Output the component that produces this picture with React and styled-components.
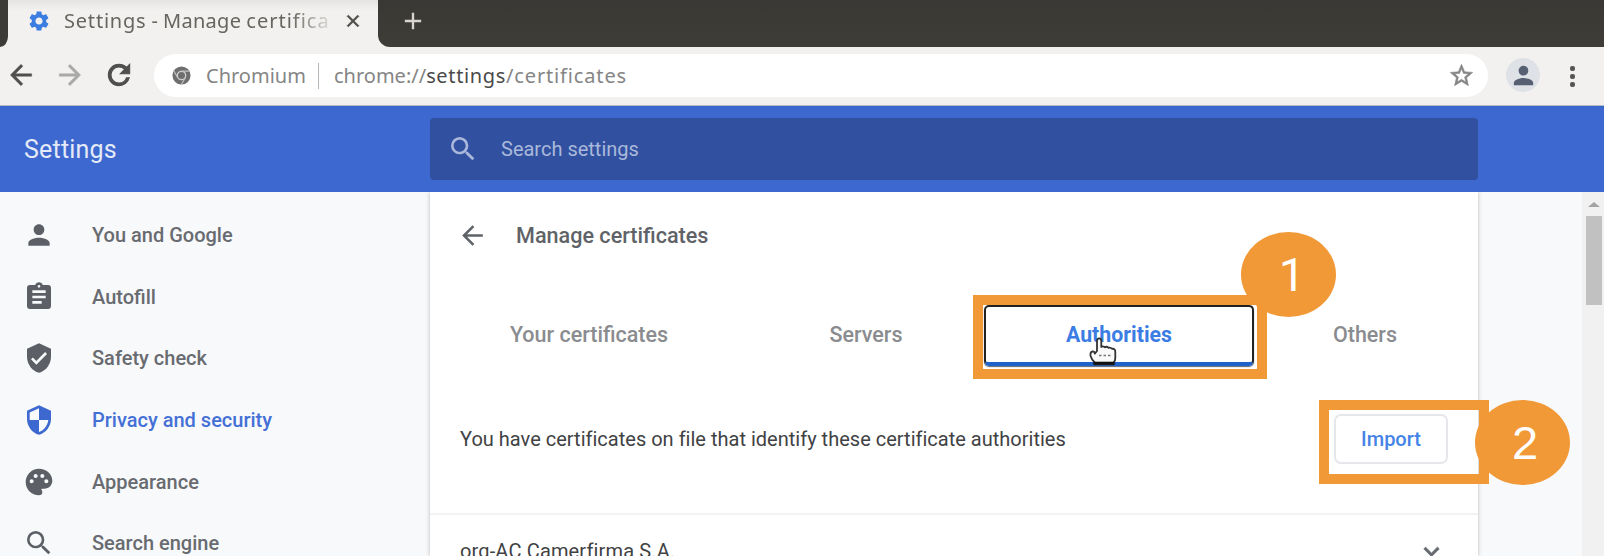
import React from "react";
import styled, { createGlobalStyle } from "styled-components";
import {
  MdPerson, MdAssignment, MdVerifiedUser, MdSecurity, MdPalette, MdSearch,
  MdArrowBack, MdArrowForward, MdSettings, MdRefresh, MdStarBorder,
  MdClose, MdAdd, MdExpandMore,
} from "react-icons/md";

const Global = createGlobalStyle`
  *, *::before, *::after { box-sizing: border-box; }
  body { margin: 0; overflow: hidden; }
  svg { display: block; flex: none; }
  svg path[fill="none"] { stroke: none; }
`;

const Window = styled.div`
  position: relative;
  width: 1604px;
  height: 556px;
  overflow: hidden;
  display: flex;
  flex-direction: column;
  background: #f8f9fb;
  font-family: Roboto, "Liberation Sans", sans-serif;
  font-size: 20px;
`;

const Label = styled.span`
  white-space: nowrap;
  letter-spacing: ${(p) => p.$track || 0}px;
`;

/* Tab strip */
const TabStrip = styled.div`
  display: flex;
  flex: none;
  height: 47px;
  background: linear-gradient(#e4e3e1, #f2f1ef 10px);
`;
const StripEdge = styled.div`
  width: 8px;
  background: #3c3b37;
  border-bottom-right-radius: 9px 12px;
`;
const StripRest = styled.div`
  flex: 1;
  display: flex;
  align-items: center;
  padding: 0 0 5px 21px;
  color: #d8d5cd;
  background: linear-gradient(#393834, #3e3d38);
  border-bottom-left-radius: 12px;
`;
const BrowserTab = styled.div`
  width: 370px;
  display: flex;
  align-items: center;
  padding: 0 0 5px 19px;
  color: #3b7de0;
`;
const TabTitle = styled.span`
  display: flex;
  gap: 5px;
  width: 270px;
  margin: 0 9px 0 13px;
  overflow: hidden;
  font: 20px/28px "Noto Sans", sans-serif;
  color: #66665f;
  mask-image: linear-gradient(to right, #000 84%, transparent 101%);
`;
const CloseIcon = styled(MdClose)`
  color: #50504c;
  stroke: currentColor;
  stroke-width: 1;
`;

/* Toolbar */
const Toolbar = styled.div`
  display: flex;
  flex: none;
  align-items: center;
  height: 59px;
  padding: 0 0 2px 5px;
  background: #f2f1ef;
  border-bottom: 1px solid #b9bdc6;
`;
const NavIcon = styled.div`
  width: 32px;
  margin-right: 17px;
  color: ${(p) => (p.$dim ? "#a9a9a7" : "#4f4f4d")};
  svg { stroke: currentColor; stroke-width: ${(p) => p.$bold || 0.3}; }
`;
const Omnibox = styled.div`
  display: flex;
  align-items: center;
  width: 1334px;
  height: 43px;
  margin: 1px 0 0 2px;
  padding: 0 13px 0 18px;
  border-radius: 22px;
  background: #fff;
  color: #858585;
  font: 20px/28px "Noto Sans", sans-serif;
`;
const Origin = styled(Label)`
  width: 112px;
  margin-left: 15px;
`;
const Separator = styled.div`
  width: 1px;
  height: 26px;
  margin-right: 15px;
  background: #b5b5b5;
`;
const Url = styled.div`
  display: flex;
  flex: 1;
`;
const Host = styled(Label)`
  color: #4a4a4a;
`;
const Avatar = styled.div`
  display: flex;
  align-items: center;
  justify-content: center;
  width: 34px;
  height: 34px;
  margin: 0 47px 0 18px;
  border-radius: 50%;
  background: #dee1e6;
  color: #566072;
`;
const DotMenu = styled.div`
  display: flex;
  flex-direction: column;
  gap: 3px;
  margin-left: -17px;
  padding-top: 2px;
`;
const Dot = styled.i`
  width: 5px;
  height: 5px;
  border-radius: 2px;
  background: #555;
`;

/* Settings header */
const Header = styled.header`
  display: flex;
  flex: none;
  align-items: center;
  height: 86px;
  padding: 0 0 1px 24px;
  background: #3c68cf;
  border-top: 1px solid #3763c5;
`;
const HeaderTitle = styled(Label)`
  width: 406px;
  color: #e4eaf8;
  font-size: 25px;
`;
const SearchBox = styled.div`
  display: flex;
  align-items: center;
  gap: 22px;
  width: 1048px;
  height: 62px;
  padding-left: 17px;
  border-radius: 4px;
  background: #3151a0;
  color: #aab8db;
`;

/* Page body */
const Body = styled.div`
  display: flex;
  flex: 1;
  min-height: 0;
`;
const Sidebar = styled.nav`
  width: 430px;
  padding-top: 12.5px;
`;
const NavRow = styled.div`
  display: flex;
  align-items: center;
  gap: 37px;
  height: 61.6px;
  padding-left: 23px;
  font-weight: 500;
  color: ${(p) => (p.$active ? "#4470d6" : "#686b70")};
  svg { color: ${(p) => (p.$active ? "#3c68cf" : "#5c6066")}; }
`;
const Card = styled.main`
  width: 1048px;
  background: #fff;
  box-shadow: 0 0 4px rgba(60, 64, 67, 0.35);
  clip-path: inset(0 -6px);
`;
const CardHeader = styled.div`
  display: flex;
  align-items: center;
  gap: 28px;
  height: 87px;
  padding-left: 27px;
  color: #5f6368;
  font-weight: 500;
  font-size: 21.6px;
`;
const Tabs = styled.div`
  display: flex;
  height: 88px;
  padding-top: 26px;
`;
const Tab = styled.div`
  display: flex;
  align-items: center;
  justify-content: center;
  width: ${(p) => p.$w}px;
  height: 61px;
  padding-bottom: 1px;
  border: 2px solid ${(p) => (p.$active ? "#222" : "transparent")};
  border-bottom: 4px solid ${(p) => (p.$active ? "#1f62c9" : "transparent")};
  border-radius: 5px;
  color: ${(p) => (p.$active ? "#3b7de4" : "#8a8c8f")};
  font-weight: ${(p) => (p.$active ? 700 : 500)};
  font-size: ${(p) => (p.$active ? 21.3 : 21.5)}px;
  box-shadow: ${(p) => (p.$active ? "0 1px 1px rgba(30, 40, 60, 0.7)" : "none")};
`;
const ImportRow = styled.div`
  display: flex;
  align-items: center;
  justify-content: space-between;
  height: 148px;
  padding: 0 30px 3px 30px;
  border-bottom: 2px solid #f3f3f4;
  color: #414244;
`;
const ImportButton = styled.button`
  width: 114px;
  height: 50px;
  padding: 0;
  border: 2px solid #e5e7ea;
  border-radius: 7px;
  background: #fff;
  color: #4583e6;
  font: 500 20px Roboto, sans-serif;
`;
const AuthorityRow = styled.div`
  display: flex;
  align-items: center;
  justify-content: space-between;
  height: 72px;
  padding: 0 31px 0 30px;
  color: #414244;
  svg { color: #666a6e; stroke: currentColor; stroke-width: 0.5; }
`;
const ScrollTrack = styled.div`
  display: flex;
  flex-direction: column;
  align-items: center;
  gap: 9px;
  width: 22px;
  margin-left: auto;
  padding: 10px 0 0 1px;
  background: #f1f1f1;
`;
const ScrollArrow = styled.div`
  border: 6px solid transparent;
  border-top: 0;
  border-bottom: 5px solid #a3a3a3;
`;
const ScrollThumb = styled.div`
  width: 16px;
  height: 89px;
  background: #c1c1c1;
`;

/* Step annotations lying over the page */
const Frame = styled.div`
  position: absolute;
  left: ${(p) => p.$x}px;
  top: ${(p) => p.$y}px;
  width: ${(p) => p.$w}px;
  height: 84px;
  border: 10px solid #f19837;
`;
const Badge = styled.div`
  position: absolute;
  left: ${(p) => p.$x}px;
  top: ${(p) => p.$y}px;
  width: 95px;
  height: 85px;
  padding-top: 2px;
  padding-left: ${(p) => p.$shift || 0}px;
  border-radius: 50%;
  background: #f19837;
  color: #fff;
  font: 47px/82px ${(p) => p.$font || "Liberation Sans"}, Arial, sans-serif;
  text-align: center;
`;
const Pointer = styled.svg`
  position: absolute;
  left: 1089px;
  top: 337px;
`;

const ChromiumIcon = () => (
  <svg width="19" height="19" viewBox="0 0 20 20">
    <circle cx="10" cy="10" r="9.5" fill="#6e6e6e" />
    <circle cx="10" cy="10" r="4.4" fill="none" stroke="#d0d0d0" strokeWidth="1.4" />
    <path d="M10 5.4h8.6M6 12.3 1.7 4.8M14 12.3 9.8 19.5" stroke="#c4c4c4" strokeWidth="1.2" />
  </svg>
);

const HandCursor = () => (
  <Pointer width="29" height="30" viewBox="0 0 29 30">
    <path
      d="M8 14V4q0-2.6 2.1-2.6T12.3 4v6q1.3-1.5 3.7.3 1.7-1.4 3.6.5 2-.8 3.4 1 3.3-.5 3.3 3.2v6q0 2.5-1.5 4.5v1.8H5.3V25q-2.7-2.6-3.7-6-.8-3.8 2-4.6 1.8-.2 2.2 2.2z"
      fill="#fafafa" stroke="#333" strokeWidth="1.8" strokeLinejoin="round"
    />
    <path d="M4.5 26.2h21" stroke="#111" strokeWidth="3" />
    <path d="M10 18.5h2.500M14.5 18.5H17M19 18.5h2.5" stroke="#777" strokeWidth="1.5" />
  </Pointer>
);

const NAV = [
  ["You and Google", MdPerson],
  ["Autofill", MdAssignment],
  ["Safety check", MdVerifiedUser],
  ["Privacy and security", MdSecurity],
  ["Appearance", MdPalette],
  ["Search engine", MdSearch],
];
const TABS = [
  ["Your certificates", 318],
  ["Servers", 236],
  ["Authorities", 270],
  ["Others", 222],
];

export default function App() {
  return (
    <Window>
      <Global />
      <TabStrip>
        <StripEdge />
        <BrowserTab>
          <MdSettings size={24} />
          <TabTitle>
            <Label $track={0.8}>Settings</Label>
            <Label>-</Label>
            <Label $track={0.3}>Manage</Label>
            <Label $track={1}>certifica</Label>
          </TabTitle>
          <CloseIcon size={20} />
        </BrowserTab>
        <StripRest><MdAdd size={28} /></StripRest>
      </TabStrip>
      <Toolbar>
        <NavIcon><MdArrowBack size={32} /></NavIcon>
        <NavIcon $dim><MdArrowForward size={32} /></NavIcon>
        <NavIcon $bold={0.8}><MdRefresh size={32} /></NavIcon>
        <Omnibox>
          <ChromiumIcon />
          <Origin>Chromium</Origin>
          <Separator />
          <Url>
            <Label>chrome://</Label>
            <Host $track={0.65}>settings</Host>
            <Label $track={0.85}>/certificates</Label>
          </Url>
          <MdStarBorder size={27} stroke="currentColor" strokeWidth={0.5} />
        </Omnibox>
        <Avatar><MdPerson size={29} /></Avatar>
        <DotMenu><Dot /><Dot /><Dot /></DotMenu>
      </Toolbar>
      <Header>
        <HeaderTitle $track={0.2}>Settings</HeaderTitle>
        <SearchBox>
          <MdSearch size={32} />
          <Label>Search settings</Label>
        </SearchBox>
      </Header>
      <Body>
        <Sidebar>
          {NAV.map(([name, Icon]) => (
            <NavRow key={name} $active={name === "Privacy and security"}>
              <Icon size={32} />
              <Label>{name}</Label>
            </NavRow>
          ))}
        </Sidebar>
        <Card>
          <CardHeader>
            <MdArrowBack size={31} />
            <Label>Manage certificates</Label>
          </CardHeader>
          <Tabs>
            {TABS.map(([name, w]) => (
              <Tab key={name} $w={w} $active={name === "Authorities"}>
                <Label>{name}</Label>
              </Tab>
            ))}
          </Tabs>
          <ImportRow>
            <Label $track={0.01}>You have certificates on file that identify these certificate authorities</Label>
            <ImportButton>Import</ImportButton>
          </ImportRow>
          <AuthorityRow>
            <Label $track={0.15}>org-AC Camerfirma S.A.</Label>
            <MdExpandMore size={31} />
          </AuthorityRow>
        </Card>
        <ScrollTrack>
          <ScrollArrow />
          <ScrollThumb />
        </ScrollTrack>
      </Body>
      <Frame $x={973} $y={295} $w={294} />
      <Badge $x={1241} $y={232} $shift={7} $font="Roboto">1</Badge>
      <Frame $x={1319} $y={400} $w={170} />
      <Badge $x={1475} $y={400} $shift={5}>2</Badge>
      <HandCursor />
    </Window>
  );
}
